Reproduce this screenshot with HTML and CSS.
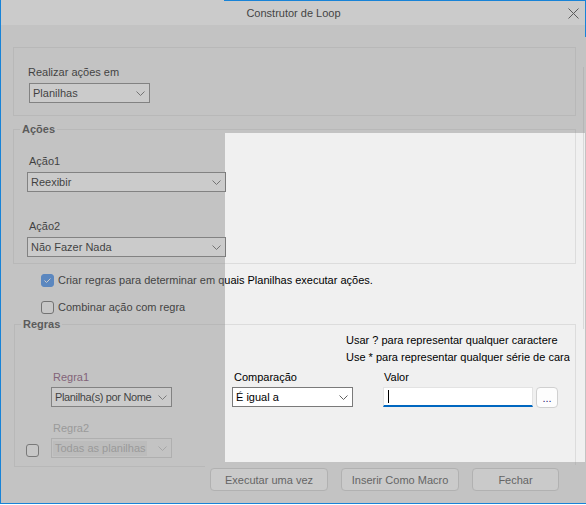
FILE: index.html
```html
<!DOCTYPE html>
<html lang="pt">
<head>
    <meta charset="UTF-8">
    <meta name="viewport" content="width=device-width, initial-scale=1.0">
    <title>Construtor de Loop</title>
    <link rel="stylesheet" href="styles.css">
</head>
<body>
<div class="window">
    <div class="titlebar">
        <span class="titlebar__title">Construtor de Loop</span>
        <svg class="titlebar__close" width="11" height="11" viewBox="0 0 11 11">
            <path d="M0.5 0.5 L10.5 10.5 M10.5 0.5 L0.5 10.5" stroke="#333" stroke-width="1" fill="none"/>
        </svg>
    </div>

    <div class="content">
        <div class="group group--target">
            <div class="field-label">Realizar ações em</div>
            <div class="combo combo--target">
                <span class="combo__text">Planilhas</span>
                <svg class="combo__arrow" width="9" height="5" viewBox="0 0 9 5"><polyline points="0.5,0.5 4.5,4.5 8.5,0.5" stroke="#606060" fill="none"/></svg>
            </div>
        </div>

        <fieldset class="group group--actions">
            <legend>Ações</legend>
            <div class="field-label">Ação1</div>
            <div class="combo combo--action">
                <span class="combo__text">Reexibir</span>
                <svg class="combo__arrow" width="9" height="5" viewBox="0 0 9 5"><polyline points="0.5,0.5 4.5,4.5 8.5,0.5" stroke="#606060" fill="none"/></svg>
            </div>
            <div class="field-label field-label--spaced">Ação2</div>
            <div class="combo combo--action">
                <span class="combo__text">Não Fazer Nada</span>
                <svg class="combo__arrow" width="9" height="5" viewBox="0 0 9 5"><polyline points="0.5,0.5 4.5,4.5 8.5,0.5" stroke="#606060" fill="none"/></svg>
            </div>
        </fieldset>

        <div class="check-row check-row--first">
            <span class="check check--on">
                <svg width="11" height="11" viewBox="0 0 11 11"><polyline points="2.5,5.5 4.5,7.5 8.5,3.5" stroke="#fff" stroke-width="1" fill="none"/></svg>
            </span>
            <span>Criar regras para determinar em quais Planilhas executar ações.</span>
        </div>
        <div class="check-row">
            <span class="check"></span>
            <span>Combinar ação com regra</span>
        </div>

        <fieldset class="group group--rules">
            <legend>Regras</legend>
            <div class="hint">
                <div>Usar ? para representar qualquer caractere</div>
                <div>Use * para representar qualquer série de caracteres</div>
            </div>

            <div class="rules">
                <div class="field-label rules__first rules__label--accent">Regra1</div>
                <div class="field-label rules__label--cmp">Comparação</div>
                <div class="field-label rules__label--value">Valor</div>

                <div class="combo rules__first">
                    <span class="combo__text combo__text--tight">Planilha(s) por Nome</span>
                    <svg class="combo__arrow" width="9" height="5" viewBox="0 0 9 5"><polyline points="0.5,0.5 4.5,4.5 8.5,0.5" stroke="#707070" fill="none"/></svg>
                </div>
                <div class="combo">
                    <span class="combo__text">É igual a</span>
                    <svg class="combo__arrow" width="9" height="5" viewBox="0 0 9 5"><polyline points="0.5,0.5 4.5,4.5 8.5,0.5" stroke="#606060" fill="none"/></svg>
                </div>
                <div class="value-row">
                    <div class="value-input"><span class="caret"></span></div>
                    <button type="button" class="dots">...</button>
                </div>

                <div class="field-label rules__first rules__label--disabled">Regra2</div>

                <span class="check check--rule"></span>
                <div class="combo combo--disabled">
                    <span class="combo__sel">Todas as planilhas</span>
                    <svg class="combo__arrow" width="9" height="5" viewBox="0 0 9 5"><polyline points="0.5,0.5 4.5,4.5 8.5,0.5" stroke="#bdbdbd" fill="none"/></svg>
                </div>
            </div>
        </fieldset>

        <div class="button-bar">
            <button type="button" class="btn">Executar uma vez</button>
            <button type="button" class="btn">Inserir Como Macro</button>
            <button type="button" class="btn btn--close">Fechar</button>
        </div>
    </div>

    <div class="panel-edge"></div>
    <div class="spotlight"></div>
</div>
</body>
</html>
```

FILE: styles.css
```css
body {
    margin: 0;
    font-family: "Liberation Sans", Arial, sans-serif;
    font-size: 11px;
    color: #000;
    background: #fff;
}
.window {
    position: relative;
    width: 586px;
    height: 504px;
    box-sizing: border-box;
    border-left: 1px solid #1883d7;
    border-bottom: 1px solid #1883d7;
    background: #f0f0f0;
    overflow: hidden;
}
.window::after {
    content: "";
    position: absolute;
    top: 0;
    right: 0;
    width: 1px;
    height: 37px;
    background: #1883d7;
    z-index: 2;
}
.titlebar {
    position: relative;
    height: 25px;
    background: #fff;
    display: flex;
    align-items: center;
    justify-content: center;
}
.titlebar::before {
    content: "";
    position: absolute;
    top: 0;
    left: 223px;
    right: 0;
    height: 1px;
    background: #1883d7;
    z-index: 2;
}
.titlebar__close {
    position: absolute;
    right: 7px;
    top: 8px;
}
.content { padding: 0 10px 0 12px; }

/* thin edge of the scrolling panel on the right */
.panel-edge {
    position: absolute;
    left: 582px;
    top: 67px;
    width: 1px;
    height: 262px;
    background: #d9d9d9;
}

/* group boxes */
.group {
    border: 1px solid #dcdcdc;
    margin: 0;
    padding: 0;
    min-width: 0;
}
.group legend {
    margin-left: 6px;
    padding: 0 2px;
    font-weight: bold;
    line-height: 16px;
    color: #333;
}
.group--target {
    margin-top: 22px;
    padding: 16px 0 12px 14px;
}
.group--actions {
    margin-top: 5px;
    padding: 16px 0 6px 0;
}
.group--actions .field-label { margin-left: 15px; }
.group--rules {
    margin: 2px 0 0 1px;
    padding: 0 0 8px 0;
}

.field-label {
    line-height: 16px;
    margin-bottom: 3px;
}
.field-label--spaced { margin-top: 26px; }

/* combo boxes */
.combo {
    display: flex;
    align-items: center;
    box-sizing: border-box;
    width: 121px;
    height: 20px;
    padding-left: 3px;
    border: 1px solid #7a7a7a;
    background: #fff;
    white-space: nowrap;
}
.combo__text {
    flex: 1;
    min-width: 0;
    overflow: hidden;
    margin-right: 3px;
}
.combo__text--tight { letter-spacing: -0.35px; }
.combo__arrow {
    flex: none;
    margin-right: 4px;
}
.combo--target { margin-left: 1px; }
.combo--action {
    width: 199px;
    margin-left: 13px;
}
.combo--disabled {
    border-color: #cccccc;
    background: #f0f0f0;
    padding-left: 1px;
    color: #a6a6a6;
}
.combo__sel {
    flex: 1;
    min-width: 0;
    overflow: hidden;
    height: 15px;
    line-height: 15px;
    padding-left: 2px;
    margin-right: 11px;
    background: #e4e4e4;
}

/* check boxes */
.check-row {
    display: flex;
    align-items: center;
    gap: 4px;
    height: 14px;
    margin: 13px 0 0 28px;
}
.check-row--first { margin-top: 9px; }
.check {
    display: flex;
    align-items: center;
    justify-content: center;
    flex: none;
    box-sizing: border-box;
    width: 13px;
    height: 13px;
    border: 1px solid #5f5f5f;
    border-radius: 3px;
    background: #f7f7f7;
}
.check--on {
    background: #3383ea;
    border-color: #3383ea;
}
.check--rule {
    grid-column: 1;
    align-self: end;
    margin: 0 0 1px 11px;
    border-color: #6a6a6a;
}

/* rules */
.hint {
    margin-left: 331px;
    width: 224px;
    overflow: hidden;
    white-space: nowrap;
    line-height: 17px;
}
.rules {
    display: grid;
    grid-template-columns: 36px 181px 151px auto;
    grid-template-rows: 18px 20px 31px 20px;
    justify-items: start;
    margin-top: 3px;
}
.rules .field-label { margin-bottom: 2px; }
.rules__first { grid-column: 2; }
.rules__label--accent {
    margin-left: 2px;
    color: #7a4068;
}
.rules__label--cmp { margin-left: 2px; }
.rules__label--value { margin-left: 1px; }
.rules .rules__label--disabled {
    margin: 13px 0 2px 2px;
    color: #a6a6a6;
}

.value-row {
    display: flex;
    gap: 3px;
}
.value-input {
    display: flex;
    align-items: flex-start;
    box-sizing: border-box;
    width: 150px;
    height: 20px;
    padding: 2px 0 0 4px;
    border: 1px solid #e3e3e3;
    border-bottom: 2px solid #0067c0;
    background: #fff;
}
.caret {
    width: 1px;
    height: 13px;
    background: #000;
}
.dots {
    box-sizing: border-box;
    width: 22px;
    height: 21px;
    padding: 0;
    border: 1px solid #d0d0d0;
    border-radius: 4px;
    background: #fdfdfd;
    font: inherit;
    color: #2a1a70;
}

/* buttons */
.button-bar {
    display: flex;
    gap: 13px;
    margin: -2px 0 0 192px;
    padding: 3px 0 0 5px;
    background: #f0f0f0;
}
.btn {
    box-sizing: border-box;
    width: 118px;
    height: 23px;
    padding: 0;
    border: 1px solid #d0d0d0;
    border-radius: 4px;
    background: #fdfdfd;
    font: inherit;
    color: #444;
}
.btn--close { width: 87px; }

/* dimmed dialog with an undimmed area */
.spotlight {
    position: absolute;
    left: 224px;
    top: 133px;
    width: 360px;
    height: 329px;
    box-shadow: 0 0 0 700px rgba(140, 140, 140, 0.45);
    pointer-events: none;
    z-index: 1;
}
```
